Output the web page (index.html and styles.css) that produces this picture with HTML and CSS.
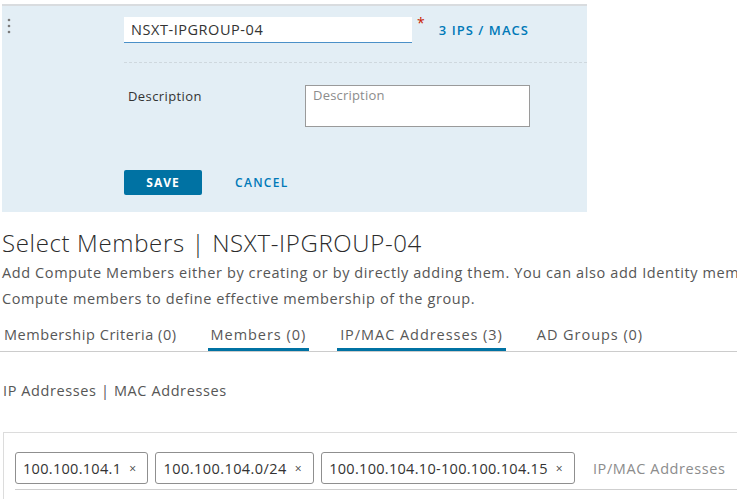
FILE: index.html
```html
<!DOCTYPE html>
<html lang="en">
<head>
<meta charset="utf-8">
<title>Select Members</title>
<link rel="stylesheet" href="styles.css">
</head>
<body>
<div class="page">
  <section class="panel">
    <div class="grip">
      <svg width="4" height="16" viewBox="0 0 4 16"><circle cx="2" cy="2" r="1.3" fill="#7a7a7a"/><circle cx="2" cy="8" r="1.3" fill="#7a7a7a"/><circle cx="2" cy="14" r="1.3" fill="#7a7a7a"/></svg>
    </div>
    <div class="form">
      <div class="name-row">
        <div class="name-input">NSXT-IPGROUP-04</div>
        <span class="req">*</span>
        <a class="link count">3 IPS / MACS</a>
      </div>
      <div class="divider"></div>
      <div class="desc-row">
        <label class="desc-label">Description</label>
        <div class="textarea">Description</div>
      </div>
      <div class="actions">
        <button class="btn-primary">SAVE</button>
        <a class="link cancel">CANCEL</a>
      </div>
    </div>
  </section>

  <h1 class="title">Select Members | NSXT-IPGROUP-04</h1>
  <p class="intro">Add Compute Members either by creating or by directly adding them. You can also add Identity members along with<br>Compute members to define effective membership of the group.</p>

  <nav class="tabs">
    <span class="tab">Membership Criteria (0)</span>
    <span class="tab active">Members (0)</span>
    <span class="tab active">IP/MAC Addresses (3)</span>
    <span class="tab">AD Groups (0)</span>
  </nav>

  <div class="sub">IP Addresses | MAC Addresses</div>

  <div class="box">
    <div class="chips">
      <span class="chip">100.100.104.1<span class="x">×</span></span>
      <span class="chip wide">100.100.104.0/24<span class="x">×</span></span>
      <span class="chip">100.100.104.10-100.100.104.15<span class="x">×</span></span>
      <span class="placeholder">IP/MAC Addresses</span>
    </div>
  </div>
</div>
</body>
</html>
```

FILE: styles.css
```css
* { box-sizing: border-box; }
html, body { margin: 0; padding: 0; background: #fff; }
body {
  font-family: "Open Sans", "Lato", sans-serif;
  color: #565656;
  overflow: hidden;
  height: 499px;
}
.page { width: 737px; overflow: hidden; }

.panel {
  margin: 4px 0 0 2px;
  width: 585px;
  background: #e3eef5;
  border-top: 2px solid #d9dcdf;
  display: flex;
  padding: 11px 0 17px;
}
.grip { width: 122px; padding: 1px 0 0 5px; }
.grip svg { display: block; }
.form { flex: 1; }

.name-row { display: flex; align-items: center; height: 26px; }
.name-input {
  width: 288px; height: 26px;
  background: #fff;
  border-bottom: 1px solid #4a90c8;
  font-size: 14.5px; line-height: 26px; letter-spacing: 0.55px;
  padding-left: 7px; color: #333;
}
.req { color: #c92100; font-size: 14px; margin-left: 5px; align-self: flex-start; line-height: 12px; }
.link { color: #0079b8; font-weight: 600; font-size: 12px; letter-spacing: 1.3px; }
.count { margin-left: 14px; font-size: 13px; letter-spacing: 1.05px; }

.divider { margin-top: 19px; border-top: 1px dashed #cfd8de; }

.desc-row { display: flex; margin-top: 22px; }
.desc-label { width: 181px; padding: 2px 0 0 4px; font-size: 13px; letter-spacing: 0.4px; color: #333; }
.textarea {
  width: 225px; height: 42px;
  background: #fff;
  border: 1px solid #9a9a9a;
  font-size: 13px; letter-spacing: 0.2px; color: #8c8c8c;
  padding: 0 0 0 7px;
}

.actions { display: flex; align-items: center; margin-top: 43px; }
.btn-primary {
  width: 78px; height: 25px;
  background: #0072a3; color: #fff;
  border: 0; border-radius: 2px;
  font-family: inherit; font-weight: 700; font-size: 12px; letter-spacing: 1px;
  padding: 0;
}
.cancel { margin-left: 33px; }

.title {
  margin: 18px 0 0; padding-left: 2px;
  font-size: 24px; line-height: 26px; font-weight: 300; color: #2b2b2b;
  letter-spacing: 0.65px;
}
.intro {
  margin: 4px 0 0; padding-left: 2px;
  font-size: 14.5px; line-height: 26px; white-space: nowrap; color: #565656;
  letter-spacing: 0.6px;
}

.tabs { display: flex; gap: 28px; border-bottom: 1px solid #cccccc; padding-left: 1px; }
.tab {
  padding: 14px 3px 4px;
  font-size: 14.5px; line-height: 18px; letter-spacing: 0.55px;
  border-bottom: 3px solid transparent;
  color: #575757;
}
.tab + .tab { letter-spacing: 0.95px; }
.tab.active { border-bottom-color: #0072a3; }

.sub { margin-top: 30px; padding-left: 3px; font-size: 14.5px; line-height: 18px; letter-spacing: 0.6px; color: #565656; }

.box {
  margin: 32px 0 0 3px;
  height: 80px;
  border-top: 1px solid #dcdcdc;
  border-left: 1px solid #dcdcdc;
  padding: 19px 0 0 11px;
}
.chips {
  display: flex; align-items: center; gap: 7px;
  border-bottom: 1px solid #cfcfcf;
  padding-bottom: 5px;
}
.chip {
  height: 32px;
  display: inline-flex; align-items: center;
  border: 1px solid #8f8f8f; border-radius: 3px;
  padding: 0 11px 0 7px;
  font-size: 14.5px; letter-spacing: 0.3px; color: #333;
}
.chip.wide { letter-spacing: 0.45px; }
.x { font-size: 12px; margin-left: 8px; color: #444; }
.placeholder { margin-left: 11px; font-size: 14.5px; letter-spacing: 0.6px; color: #8c8c8c; }
```
